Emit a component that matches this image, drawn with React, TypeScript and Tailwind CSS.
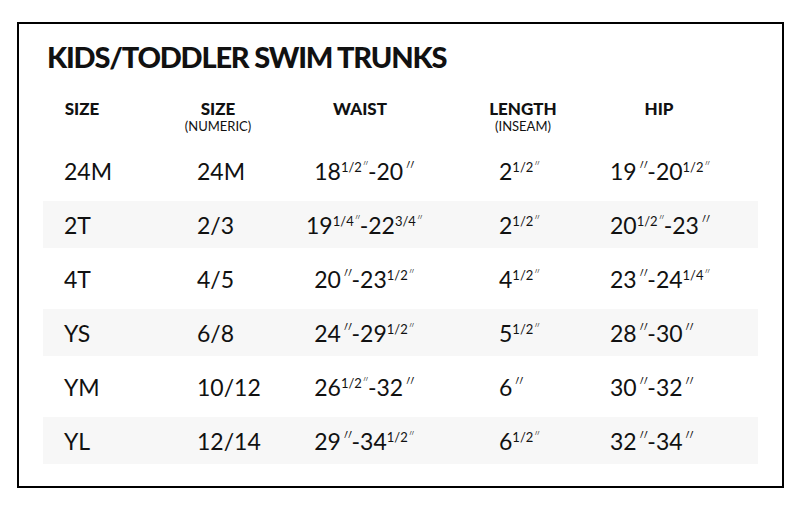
import React from 'react';

type Cell = React.ReactNode;

const In = () => <span className="italic font-light">″</span>;

const Sup = ({ children }: { children: React.ReactNode }) => (
  <span className="text-[13px] align-[8px] leading-none">{children}</span>
);

const half = <Sup>1/2<In /></Sup>;
const quarter = <Sup>1/4<In /></Sup>;
const threeQ = <Sup>3/4<In /></Sup>;

const rows: Cell[][] = [
  ['24M', '24M', <>18{half}-20<In /></>, <>2{half}</>, <>19<In />-20{half}</>],
  ['2T', '2/3', <>19{quarter}-22{threeQ}</>, <>2{half}</>, <>20{half}-23<In /></>],
  ['4T', '4/5', <>20<In />-23{half}</>, <>4{half}</>, <>23<In />-24{quarter}</>],
  ['YS', '6/8', <>24<In />-29{half}</>, <>5{half}</>, <>28<In />-30<In /></>],
  ['YM', '10/12', <>26{half}-32<In /></>, <>6<In /></>, <>30<In />-32<In /></>],
  ['YL', '12/14', <>29<In />-34{half}</>, <>6{half}</>, <>32<In />-34<In /></>],
];

const App = () => {
  return (
    <div className="w-[800px] h-[520px] bg-white pt-[22px] pl-[17px] font-['Lato','Liberation_Sans',sans-serif] text-[#111]">
      <div className="w-[767px] h-[466px] border-2 border-black px-[24px]">
        {/* Title */}
        <h1 className="pt-[18px] pl-[4px] text-[29px] leading-[30px] font-black tracking-[-1.2px]">
          KIDS/TODDLER SWIM TRUNKS
        </h1>

        {/* Column headings */}
        <div className="flex mt-[27px] font-black text-[17px] leading-[20px]">
          <div className="w-[78px] text-center">SIZE</div>
          <div className="w-[194px] text-center">
            SIZE
            <div className="text-[13px] leading-[14px] font-normal">(NUMERIC)</div>
          </div>
          <div className="w-[90px] text-center">WAIST</div>
          <div className="w-[236px] text-center">
            LENGTH
            <div className="text-[13px] leading-[14px] font-normal">(INSEAM)</div>
          </div>
          <div className="w-[36px] text-center whitespace-nowrap">HIP</div>
        </div>

        {/* Rows */}
        <div className="mt-[14px] flex flex-col gap-[7px]">
          {rows.map((r, i) => (
            <div
              key={i}
              className={`grid grid-cols-[154px_73px_188px_152px_146px] h-[47px] items-center pt-[2px] text-[23px] leading-none whitespace-nowrap ${
                i % 2 === 1 ? 'bg-[#f7f7f7]' : ''
              }`}
            >
              <div className="pl-[21px]">{r[0]}</div>
              <div>{r[1]}</div>
              <div className="text-center">{r[2]}</div>
              <div className="pl-[41px]">{r[3]}</div>
              <div>{r[4]}</div>
            </div>
          ))}
        </div>
      </div>
    </div>
  );
};

export default App;
